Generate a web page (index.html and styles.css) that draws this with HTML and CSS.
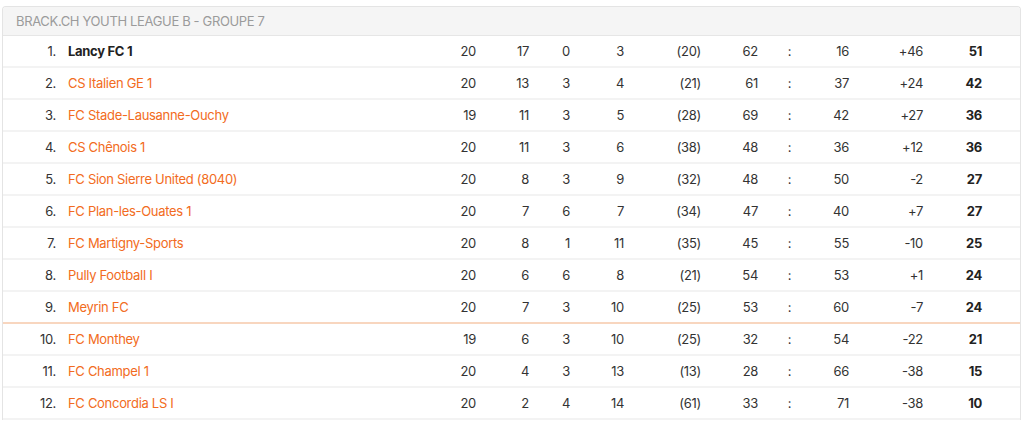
FILE: index.html
```html
<!DOCTYPE html>
<html lang="fr">
<head>
<meta charset="utf-8">
<title>Brack.ch Youth League B - Groupe 7</title>
<link rel="stylesheet" href="styles.css">
</head>
<body>
<div class="card">
  <div class="card-head">BRACK.CH YOUTH LEAGUE B - GROUPE 7</div>
  <div class="table">
    <div class="row"><span class="rank">1.</span><span class="team own">Lancy FC 1</span><span>20</span><span>17</span><span>0</span><span>3</span><span>(20)</span><span>62</span><span class="colon">:</span><span>16</span><span>+46</span><span class="pts">51</span><span></span></div>
    <div class="row"><span class="rank">2.</span><span class="team"><a href="#">CS Italien GE 1</a></span><span>20</span><span>13</span><span>3</span><span>4</span><span>(21)</span><span>61</span><span class="colon">:</span><span>37</span><span>+24</span><span class="pts">42</span><span></span></div>
    <div class="row"><span class="rank">3.</span><span class="team"><a href="#">FC Stade-Lausanne-Ouchy</a></span><span>19</span><span>11</span><span>3</span><span>5</span><span>(28)</span><span>69</span><span class="colon">:</span><span>42</span><span>+27</span><span class="pts">36</span><span></span></div>
    <div class="row"><span class="rank">4.</span><span class="team"><a href="#">CS Chênois 1</a></span><span>20</span><span>11</span><span>3</span><span>6</span><span>(38)</span><span>48</span><span class="colon">:</span><span>36</span><span>+12</span><span class="pts">36</span><span></span></div>
    <div class="row"><span class="rank">5.</span><span class="team"><a href="#">FC Sion Sierre United (8040)</a></span><span>20</span><span>8</span><span>3</span><span>9</span><span>(32)</span><span>48</span><span class="colon">:</span><span>50</span><span>-2</span><span class="pts">27</span><span></span></div>
    <div class="row"><span class="rank">6.</span><span class="team"><a href="#">FC Plan-les-Ouates 1</a></span><span>20</span><span>7</span><span>6</span><span>7</span><span>(34)</span><span>47</span><span class="colon">:</span><span>40</span><span>+7</span><span class="pts">27</span><span></span></div>
    <div class="row"><span class="rank">7.</span><span class="team"><a href="#">FC Martigny-Sports</a></span><span>20</span><span>8</span><span>1</span><span>11</span><span>(35)</span><span>45</span><span class="colon">:</span><span>55</span><span>-10</span><span class="pts">25</span><span></span></div>
    <div class="row"><span class="rank">8.</span><span class="team"><a href="#">Pully Football I</a></span><span>20</span><span>6</span><span>6</span><span>8</span><span>(21)</span><span>54</span><span class="colon">:</span><span>53</span><span>+1</span><span class="pts">24</span><span></span></div>
    <div class="row cut"><span class="rank">9.</span><span class="team"><a href="#">Meyrin FC</a></span><span>20</span><span>7</span><span>3</span><span>10</span><span>(25)</span><span>53</span><span class="colon">:</span><span>60</span><span>-7</span><span class="pts">24</span><span></span></div>
    <div class="row"><span class="rank">10.</span><span class="team"><a href="#">FC Monthey</a></span><span>19</span><span>6</span><span>3</span><span>10</span><span>(25)</span><span>32</span><span class="colon">:</span><span>54</span><span>-22</span><span class="pts">21</span><span></span></div>
    <div class="row"><span class="rank">11.</span><span class="team"><a href="#">FC Champel 1</a></span><span>20</span><span>4</span><span>3</span><span>13</span><span>(13)</span><span>28</span><span class="colon">:</span><span>66</span><span>-38</span><span class="pts">15</span><span></span></div>
    <div class="row"><span class="rank">12.</span><span class="team"><a href="#">FC Concordia LS I</a></span><span>20</span><span>2</span><span>4</span><span>14</span><span>(61)</span><span>33</span><span class="colon">:</span><span>71</span><span>-38</span><span class="pts">10</span><span></span></div>
  </div>
</div>
</body>
</html>
```

FILE: styles.css
```css
html, body {
  margin: 0;
  padding: 0;
  background: #ffffff;
}

body {
  padding: 6px 3px 0 2px;
  font-family: "Inter", "Liberation Sans", sans-serif;
  font-size: 13px;
  letter-spacing: -0.3px;
  color: #333333;
}

.card {
  border: 1px solid #e4e4e4;
  border-bottom: none;
  border-radius: 4px 4px 0 0;
  overflow: hidden;
}

.card-head {
  height: 28px;
  line-height: 28px;
  padding-left: 13px;
  background: #f5f5f5;
  border-bottom: 1px solid #e6e6e6;
  color: #9b9b9b;
  font-size: 13px;
  letter-spacing: -0.35px;
}

.row {
  display: grid;
  grid-template-columns: 53px 384px 36px 53px 41px 54px 77px 57px 63px 28px 74px 59px 1fr;
  height: 30px;
  align-items: center;
  border-bottom: 2px solid #f3f3f3;
  text-align: right;
}

.row.cut {
  border-bottom-color: #f8d6bf;
}

.rank {
  text-align: right;
}

.team {
  text-align: left;
  padding-left: 12px;
}

.team a {
  color: #f26b21;
  text-decoration: none;
}

.own {
  font-weight: 700;
  color: #222222;
}

.colon {
  text-align: center;
}

.pts {
  font-weight: 700;
  color: #222222;
}
```
